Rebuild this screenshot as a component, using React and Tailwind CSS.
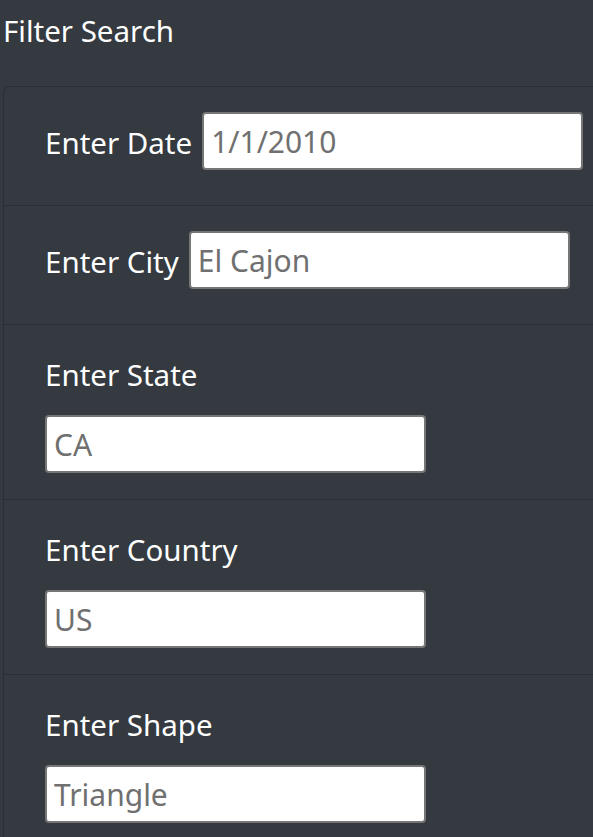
import React from 'react';

const font = { fontFamily: '"Segoe UI", "Noto Sans", sans-serif' };

const fields = [
    { label: 'Enter Date', value: '1/1/2010', inline: true },
    { label: 'Enter City', value: 'El Cajon', inline: true },
    { label: 'Enter State', value: 'CA' },
    { label: 'Enter Country', value: 'US' },
    { label: 'Enter Shape', value: 'Triangle' },
];

const inputCls = 'h-[58px] w-[381px] rounded-[4px] border-2 border-[#767676] bg-white px-[7px] text-[30px] text-[#707070] placeholder-[#707070] outline-none';

const Field = ({ label, value, inline }) => {
    if (inline) {
        return (
            <li className="flex items-center gap-[10px] border-b border-[#2b2f35] pl-[41px] pt-[25px] pb-[35px]">
                <label className="pt-[3px] text-[29.5px] leading-[42px] text-white">{label}</label>
                <input type="text" placeholder={value} className={inputCls} style={font} />
            </li>
        );
    }
    return (
        <li className="flex flex-col border-b border-[#2b2f35] pl-[41px] pt-[29px] pb-[26px]">
            <label className="mb-[19px] text-[29.5px] leading-[42px] text-white">{label}</label>
            <input type="text" placeholder={value} className={inputCls} style={font} />
        </li>
    );
};

const App = () => {
    return (
        <div className="min-h-screen overflow-hidden bg-[#343a40]" style={font}>
            <h5 className="pl-[3px] pt-[10px] text-[29.5px] leading-[42px] text-white">Filter Search</h5>
            <ul className="ml-[3px] mt-[34px] w-[620px] rounded-tl-[6px] border-l border-t border-[#2b2f35]">
                {fields.map((f) => (
                    <Field key={f.label} {...f} />
                ))}
            </ul>
        </div>
    );
};

export default App;
